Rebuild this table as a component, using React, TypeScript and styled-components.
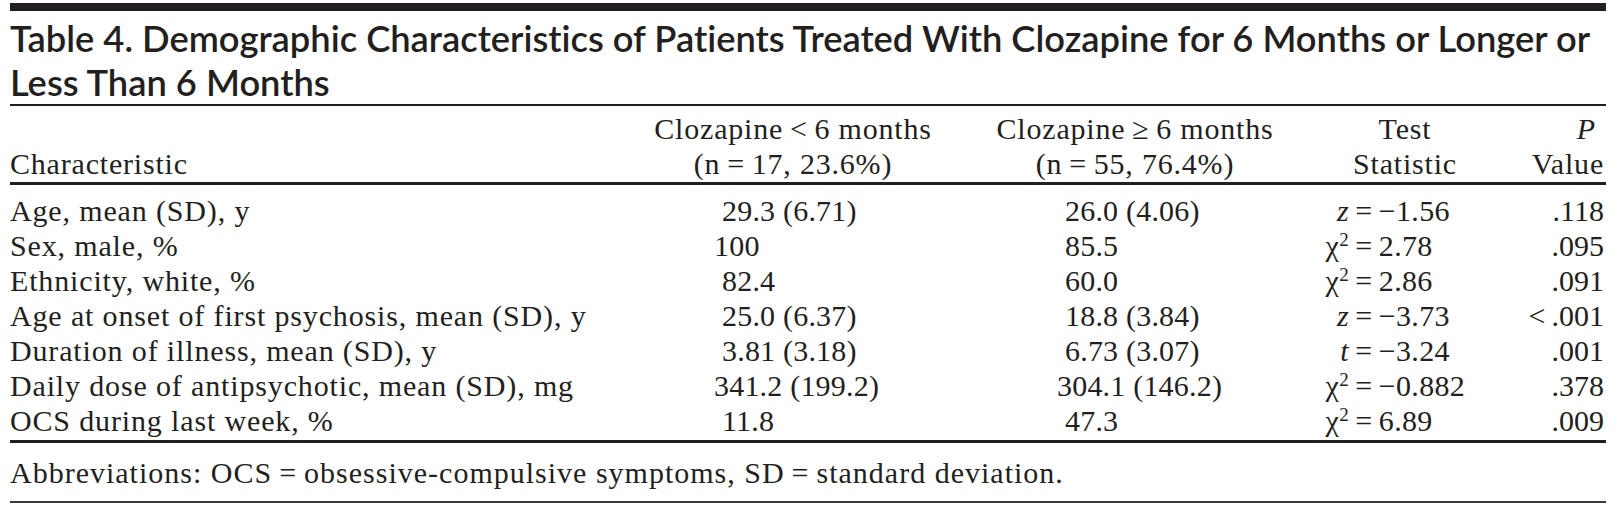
import React, { FC } from "react";
import styled, { createGlobalStyle } from "styled-components";

const GlobalStyle = createGlobalStyle`
  body {
    margin: 0;
    background: #ffffff;
  }
`;

const INK = "#231f20";
const COLUMNS = "640px 286px 364px 210px 96px";

const Page = styled.div`
  padding: 3px 11px 0 10px;
  color: ${INK};
  font-family: "Liberation Serif", "Times New Roman", serif;
`;

const TopBar = styled.div`
  height: 8px;
  background: ${INK};
`;

const Title = styled.h1`
  margin: 0;
  padding: 5px 0 0;
  font-family: Lato, "Open Sans", sans-serif;
  font-weight: 600;
  font-size: 36.3px;
  font-variant-ligatures: none;
  line-height: 44px;
  border-bottom: 2px solid ${INK};
  white-space: nowrap;
`;

const HeaderRow = styled.div`
  display: grid;
  grid-template-columns: ${COLUMNS};
  align-items: end;
  padding: 5px 0 1px;
  border-bottom: 3px solid ${INK};
  font-size: 30px;
  line-height: 35px;
  letter-spacing: 0.8px;
`;

const HeadCell = styled.div<{ align?: "left" | "center" | "right"; shift?: number }>`
  text-align: ${(p) => p.align || "center"};
  padding-left: ${(p) => p.shift || 0}px;
`;

const Italic = styled.span`
  font-style: italic;
`;

const PLabel = styled.div`
  font-style: italic;
  padding-right: 10px;
`;

const Body = styled.div`
  padding: 8px 0 2px;
  border-bottom: 3px solid ${INK};
`;

const Row = styled.div`
  display: grid;
  grid-template-columns: ${COLUMNS};
  font-size: 30px;
  line-height: 35px;
  white-space: nowrap;
`;

const Label = styled.div`
  letter-spacing: 0.85px;
`;

const Value = styled.div<{ indent: number }>`
  padding-left: ${(p) => p.indent}px;
  letter-spacing: 0.2px;
`;

const Stat = styled.div`
  display: grid;
  grid-template-columns: 49px auto;
  letter-spacing: 0.3px;
`;

const StatSymbol = styled.span`
  text-align: right;
`;

const Sup = styled.sup`
  font-size: 19px;
  line-height: 0;
  vertical-align: 10px;
`;

const PValue = styled.div`
  text-align: right;
  padding-right: 2px;
`;

const Footer = styled.div`
  padding: 12px 0 11px;
  font-size: 30px;
  line-height: 35px;
  letter-spacing: 1px;
  border-bottom: 2px solid #3a3a3a;
`;

type StatKind = "z" | "t" | "chi";

type RowData = {
  label: string;
  short: string;
  shortWide?: boolean;
  long: string;
  longWide?: boolean;
  kind: StatKind;
  stat: string;
  p: string;
};

const rows: RowData[] = [
  { label: "Age, mean (SD), y", short: "29.3 (6.71)", long: "26.0 (4.06)", kind: "z", stat: "\u22121.56", p: ".118" },
  { label: "Sex, male, %", short: "100", shortWide: true, long: "85.5", kind: "chi", stat: "2.78", p: ".095" },
  { label: "Ethnicity, white, %", short: "82.4", long: "60.0", kind: "chi", stat: "2.86", p: ".091" },
  {
    label: "Age at onset of first psychosis, mean (SD), y",
    short: "25.0 (6.37)",
    long: "18.8 (3.84)",
    kind: "z",
    stat: "\u22123.73",
    p: "<\u2009.001",
  },
  { label: "Duration of illness, mean (SD), y", short: "3.81 (3.18)", long: "6.73 (3.07)", kind: "t", stat: "\u22123.24", p: ".001" },
  {
    label: "Daily dose of antipsychotic, mean (SD), mg",
    short: "341.2 (199.2)",
    shortWide: true,
    long: "304.1 (146.2)",
    longWide: true,
    kind: "chi",
    stat: "\u22120.882",
    p: ".378",
  },
  { label: "OCS during last week, %", short: "11.8", long: "47.3", kind: "chi", stat: "6.89", p: ".009" },
];

const Symbol: FC<{ kind: StatKind }> = ({ kind }) => {
  if (kind === "chi") {
    return (
      <StatSymbol>
        {"\u03c7"}
        <Sup>2</Sup>
      </StatSymbol>
    );
  }
  return (
    <StatSymbol>
      <Italic>{kind}</Italic>
    </StatSymbol>
  );
};

const App: FC = () => {
  return (
    <Page>
      <GlobalStyle />
      <TopBar />
      <Title>
        Table 4. Demographic Characteristics of Patients Treated With Clozapine for 6 Months or Longer or
        <br />
        Less Than 6 Months
      </Title>

      <HeaderRow>
        <HeadCell align="left">Characteristic</HeadCell>
        <HeadCell>
          <div>Clozapine{"\u2009<\u2009"}6 months</div>
          <div>(n{"\u2009=\u2009"}17, 23.6%)</div>
        </HeadCell>
        <HeadCell shift={34}>
          <div>Clozapine{"\u2009\u2265\u2009"}6 months</div>
          <div>(n{"\u2009=\u2009"}55, 76.4%)</div>
        </HeadCell>
        <HeadCell>
          <div>Test</div>
          <div>Statistic</div>
        </HeadCell>
        <HeadCell align="right">
          <PLabel>P</PLabel>
          <PValue>Value</PValue>
        </HeadCell>
      </HeaderRow>

      <Body>
        {rows.map((row) => (
          <Row key={row.label}>
            <Label>{row.label}</Label>
            <Value indent={row.shortWide ? 64 : 72}>{row.short}</Value>
            <Value indent={row.longWide ? 121 : 129}>{row.long}</Value>
            <Stat>
              <Symbol kind={row.kind} />
              <span>{`\u2009=\u2009${row.stat}`}</span>
            </Stat>
            <PValue>{row.p}</PValue>
          </Row>
        ))}
      </Body>

      <Footer>
        Abbreviations: OCS{"\u2009=\u2009"}obsessive-compulsive symptoms, SD{"\u2009=\u2009"}standard deviation.
      </Footer>
    </Page>
  );
};

export default App;
